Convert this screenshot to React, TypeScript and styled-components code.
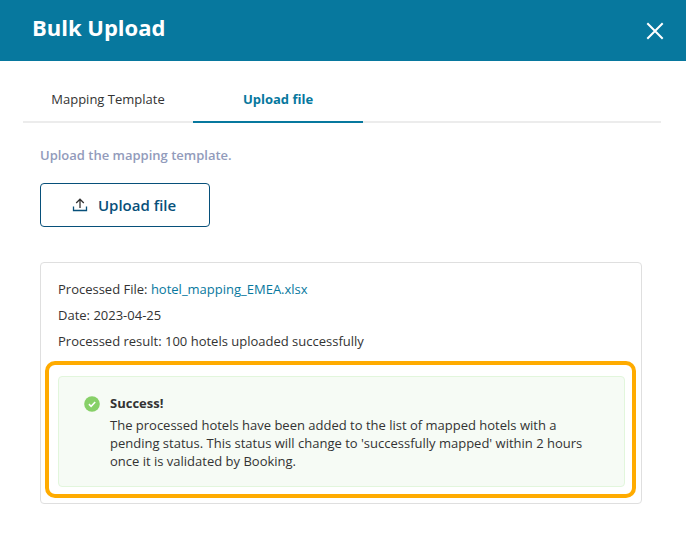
import React, { useRef, useState } from "react";
import styled, { createGlobalStyle } from "styled-components";

const GlobalStyle = createGlobalStyle`
  *, *::before, *::after { box-sizing: border-box; }
  body {
    margin: 0;
    background: #fff;
    color: #333;
    font-family: "Open Sans", "Noto Sans", sans-serif;
    font-size: 13px;
    line-height: 18px;
  }
  button { font-family: inherit; cursor: pointer; }
`;

const Header = styled.header`
  display: flex;
  align-items: center;
  justify-content: space-between;
  height: 61px;
  padding: 0 22px 0 32px;
  background: #07789e;
  color: #fff;
`;

const Title = styled.h1`
  margin: 0;
  padding-bottom: 8px;
  font-size: 22px;
  line-height: 30px;
  font-weight: 700;
`;

const CloseButton = styled.button`
  display: flex;
  padding: 0;
  border: 0;
  background: none;
  color: inherit;
`;

const TabList = styled.div`
  display: flex;
  margin: 17px 25px 0 23px;
  box-shadow: inset 0 -2px #ececec;
`;

const Tab = styled.button<{ $active: boolean }>`
  width: 170px;
  height: 45px;
  padding: 0 0 2px;
  border: 0;
  border-bottom: 2px solid ${(p) => (p.$active ? "#07789e" : "transparent")};
  background: none;
  color: ${(p) => (p.$active ? "#07789e" : "#333")};
  font-size: 13px;
  line-height: 18px;
  font-weight: ${(p) => (p.$active ? 700 : 400)};
`;

const Panel = styled.section`
  display: flex;
  flex-direction: column;
  align-items: flex-start;
  padding: 23px 44px 53px 40px;
`;

const Hint = styled.p`
  margin: 0 0 19px;
  color: #929bbb;
  font-weight: 600;
`;

const UploadButton = styled.button`
  display: flex;
  align-items: center;
  justify-content: center;
  gap: 10px;
  width: 170px;
  height: 44px;
  padding: 0 8px 0 6px;
  border: 1px solid #07507a;
  border-radius: 4px;
  background: #fff;
  color: #07507a;
  font-size: 15px;
  line-height: 20px;
  font-weight: 600;
`;

const ResultCard = styled.div`
  width: 100%;
  margin-top: 35px;
  padding: 17px 5px 5px 4px;
  border: 1px solid #dfdfdf;
  border-radius: 4px;
`;

const Details = styled.div`
  display: flex;
  flex-direction: column;
  gap: 8px;
  padding: 0 13px 11px;
`;

const Detail = styled.p`
  margin: 0;
`;

const FileLink = styled.a`
  color: #07789e;
  text-decoration: none;
`;

const Highlight = styled.div`
  padding: 11px 7px 7px 9px;
  border: 4px solid #ffab00;
  border-radius: 10px;
`;

const Alert = styled.div`
  display: flex;
  align-items: flex-start;
  gap: 10px;
  padding: 17px 25px 16px;
  border: 1px solid #e2f6dc;
  border-radius: 4px;
  background: #f6fbf5;
`;

const AlertIcon = styled.svg`
  flex: none;
  margin-top: 2px;
`;

const AlertTitle = styled.h2`
  margin: 0 0 4px;
  font-size: 13px;
  line-height: 18px;
  font-weight: 700;
`;

const AlertText = styled.p`
  max-width: 490px;
  margin: 0;
`;

type TabId = "template" | "upload";

const tabs: { id: TabId; label: string }[] = [
  { id: "template", label: "Mapping Template" },
  { id: "upload", label: "Upload file" },
];

export default function App() {
  const [active, setActive] = useState<TabId>("upload");
  const fileInput = useRef<HTMLInputElement>(null);

  return (
    <>
      <GlobalStyle />
      <Header>
        <Title>Bulk Upload</Title>
        <CloseButton type="button" aria-label="Close">
          <svg width="18" height="18" viewBox="0 0 18 18" fill="none" stroke="currentColor" strokeWidth="2">
            <path d="M1.3 1.3 16.7 16.7M16.7 1.3 1.3 16.7" />
          </svg>
        </CloseButton>
      </Header>
      <main>
        <TabList role="tablist">
          {tabs.map((tab) => (
            <Tab
              key={tab.id}
              type="button"
              role="tab"
              aria-selected={active === tab.id}
              $active={active === tab.id}
              onClick={() => setActive(tab.id)}
            >
              {tab.label}
            </Tab>
          ))}
        </TabList>
        <Panel role="tabpanel">
          <Hint>Upload the mapping template.</Hint>
          <UploadButton type="button" onClick={() => fileInput.current?.click()}>
            <svg width="16" height="14" viewBox="0 0 16 14" fill="none" strokeWidth="1.3" aria-hidden="true">
              <path d="M1.5 8.5v4h13v-4" stroke="#07507a" />
              <path d="M8 10V1.5M4.2 5 8 1.2 11.8 5" stroke="#333" />
            </svg>
            Upload file
          </UploadButton>
          <input ref={fileInput} type="file" aria-label="Mapping template file" hidden />
          <ResultCard>
            <Details>
              <Detail>
                Processed File: <FileLink href="#hotel_mapping_EMEA.xlsx">hotel_mapping_EMEA.xlsx</FileLink>
              </Detail>
              <Detail>Date: 2023-04-25</Detail>
              <Detail>Processed result: 100 hotels uploaded successfully</Detail>
            </Details>
            <Highlight>
              <Alert role="status">
                <AlertIcon width="16" height="16" viewBox="0 0 16 16" fill="none" aria-hidden="true">
                  <circle cx="8" cy="8" r="7.8" fill="#87d068" />
                  <path d="m4.9 8.1 2.2 2.2 4.1-4.4" stroke="#fff" strokeWidth="1.5" />
                </AlertIcon>
                <div>
                  <AlertTitle>Success!</AlertTitle>
                  <AlertText>
                    The processed hotels have been added to the list of mapped hotels with a pending status. This
                    status will change to 'successfully mapped' within 2 hours once it is validated by Booking.
                  </AlertText>
                </div>
              </Alert>
            </Highlight>
          </ResultCard>
        </Panel>
      </main>
    </>
  );
}
